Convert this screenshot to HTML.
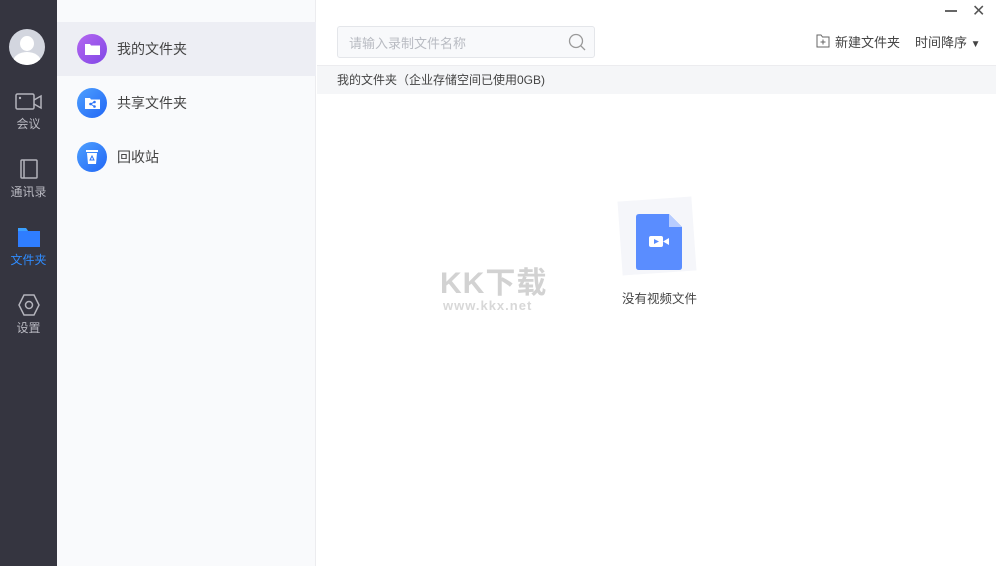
<!DOCTYPE html>
<html><head><meta charset="utf-8"><style>
*{margin:0;padding:0;box-sizing:border-box}
body{width:996px;height:566px;overflow:hidden;background:#fff;font-family:"Liberation Sans","Noto Sans CJK SC",sans-serif;position:relative;color:#333}
.nav{position:absolute;left:0;top:0;width:57px;height:566px;background:#353540}
.nav .it{position:absolute;left:0;width:57px;text-align:center;font-size:12px;color:#b8b8c0}
.side{position:absolute;left:57px;top:0;width:259px;height:566px;background:#f9fafc;border-right:1px solid #ececef}
.row{position:absolute;left:0;width:259px;height:54px}
.row .ic{position:absolute;left:20px;top:12px;width:30px;height:30px;border-radius:50%}
.row span{position:absolute;left:60px;top:17px;font-size:14px;color:#444}
.a{position:absolute}
</style></head><body>
<div class="nav">
 <div class="a" style="left:9px;top:29px;width:36px;height:36px;border-radius:50%;background:#d3d6df;overflow:hidden">
  <div class="a" style="left:11px;top:7px;width:14px;height:15px;border-radius:50%;background:#fff"></div>
  <div class="a" style="left:4px;top:23px;width:28px;height:20px;border-radius:50%;background:#fff"></div>
 </div>
 <div class="it" style="top:92px"><svg width="28" height="20" viewBox="0 0 28 20"><rect x="1" y="2" width="18" height="15" rx="1.5" fill="none" stroke="#b4b4bc" stroke-width="1.5"/><path d="M19 8 L26 4 V16 L19 12" fill="none" stroke="#b4b4bc" stroke-width="1.5"/><circle cx="5" cy="6" r="1.2" fill="#b4b4bc"/></svg><div>会议</div></div>
 <div class="it" style="top:158px"><svg width="22" height="22" viewBox="0 0 22 22"><rect x="3" y="2" width="16" height="18" rx="1" fill="none" stroke="#b4b4bc" stroke-width="1.5"/><line x1="6" y1="2" x2="6" y2="20" stroke="#b4b4bc" stroke-width="1.5"/></svg><div>通讯录</div></div>
 <div class="it" style="top:226px;color:#2f8cff"><svg width="24" height="22" viewBox="0 0 24 22"><path d="M1 2 H9 L11 5 H23 V21 H1Z" fill="#2f7dff"/><path d="M1 2 H9 L11 5 H1Z" fill="#3aa0ff"/></svg><div>文件夹</div></div>
 <div class="it" style="top:294px"><svg width="24" height="22" viewBox="0 0 24 22"><path d="M7 1 H17 L22 11 L17 21 H7 L2 11Z" fill="none" stroke="#b4b4bc" stroke-width="1.5"/><circle cx="12" cy="11" r="3.5" fill="none" stroke="#b4b4bc" stroke-width="1.5"/></svg><div>设置</div></div>
</div>
<div class="side">
 <div class="row" style="top:22px;background:#edeef4"><div class="ic" style="background:linear-gradient(135deg,#b466f0,#8047e6)"><svg class="a" style="left:8px;top:9px" width="15" height="12"><path d="M0 1 H5 L6 2.5 H15 V12 H0Z" fill="#fff"/></svg></div><span>我的文件夹</span></div>
 <div class="row" style="top:76px"><div class="ic" style="background:linear-gradient(135deg,#4ea0ff,#2266f5)"><svg class="a" style="left:8px;top:9px" width="15" height="12"><path d="M0 1 H5 L6 2.5 H15 V12 H0Z" fill="#fff"/><circle cx="5.5" cy="7" r="1.3" fill="#2e74f7"/><circle cx="9.5" cy="5" r="1.3" fill="#2e74f7"/><circle cx="9.5" cy="9.5" r="1.3" fill="#2e74f7"/><path d="M5.5 7L9.5 5M5.5 7L9.5 9.5" stroke="#2e74f7"/></svg></div><span>共享文件夹</span></div>
 <div class="row" style="top:130px"><div class="ic" style="background:linear-gradient(135deg,#4ea0ff,#2266f5)"><svg class="a" style="left:9px;top:7px" width="12" height="15"><rect x="0" y="1" width="12" height="2" fill="#fff"/><path d="M1 4 H11 L10 15 H2Z" fill="#fff"/><path d="M6 7 L8 11 H4Z" fill="none" stroke="#2e74f7"/></svg></div><span>回收站</span></div>
</div>
<div class="a" style="left:945px;top:10px;width:12px;height:1.5px;background:#666"></div>
<div class="a" style="left:972px;top:1px;font-size:16px;color:#555">✕</div>
<div class="a" style="left:337px;top:26px;width:258px;height:32px;border:1px solid #e4e6ea;border-radius:3px;background:#f8f9fb"></div>
<div class="a" style="left:349px;top:33px;font-size:13px;color:#b8bbc2">请输入录制文件名称</div>
<svg class="a" style="left:568px;top:33px" width="18" height="18"><circle cx="8" cy="8" r="6.5" fill="none" stroke="#999" stroke-width="1.3"/><line x1="12.7" y1="12.7" x2="17" y2="17" stroke="#999" stroke-width="1.3"/></svg>
<svg class="a" style="left:816px;top:34px" width="14" height="14"><path d="M1 1 H5 L6.5 3 H13 V13 H1Z" fill="none" stroke="#666"/><path d="M7 5.5V10.5M4.5 8H9.5" stroke="#666"/></svg>
<div class="a" style="left:835px;top:32px;font-size:13px;color:#444">新建文件夹</div>
<div class="a" style="left:915px;top:32px;font-size:13px;color:#444">时间降序 <span style="font-size:10px">▼</span></div>
<div class="a" style="left:317px;top:65px;width:679px;height:29px;background:#f5f6f8;border-top:1px solid #ececef"></div>
<div class="a" style="left:337px;top:71px;font-size:12px;color:#444">我的文件夹（企业存储空间已使用0GB)</div>
<div class="a" style="left:620px;top:199px;width:74px;height:74px;background:#f5f6fa;transform:rotate(-4deg)"></div>
<svg class="a" style="left:636px;top:214px" width="47" height="56"><path d="M3 0 H33 L46 13 V53 Q46 56 43 56 H3 Q0 56 0 53 V3 Q0 0 3 0Z" fill="#5a8dff"/><path d="M33 0 L46 13 H33Z" fill="#b7ccff"/><rect x="13" y="22" width="14" height="11" rx="2" fill="#fff"/><path d="M27 27.5 L33 24 V31Z" fill="#fff"/><path d="M18 25 L23 27.5 L18 30Z" fill="#5a8dff"/></svg>
<div class="a" style="left:622px;top:288px;font-size:12.5px;color:#444">没有视频文件</div>
<div class="a" style="left:440px;top:258px;font-size:30px;font-weight:bold;color:#d2d2d2;letter-spacing:1px">KK下载</div>
<div class="a" style="left:443px;top:298px;font-size:13px;font-weight:bold;color:#d8d8d8;letter-spacing:1px">www.kkx.net</div>
</body></html>
